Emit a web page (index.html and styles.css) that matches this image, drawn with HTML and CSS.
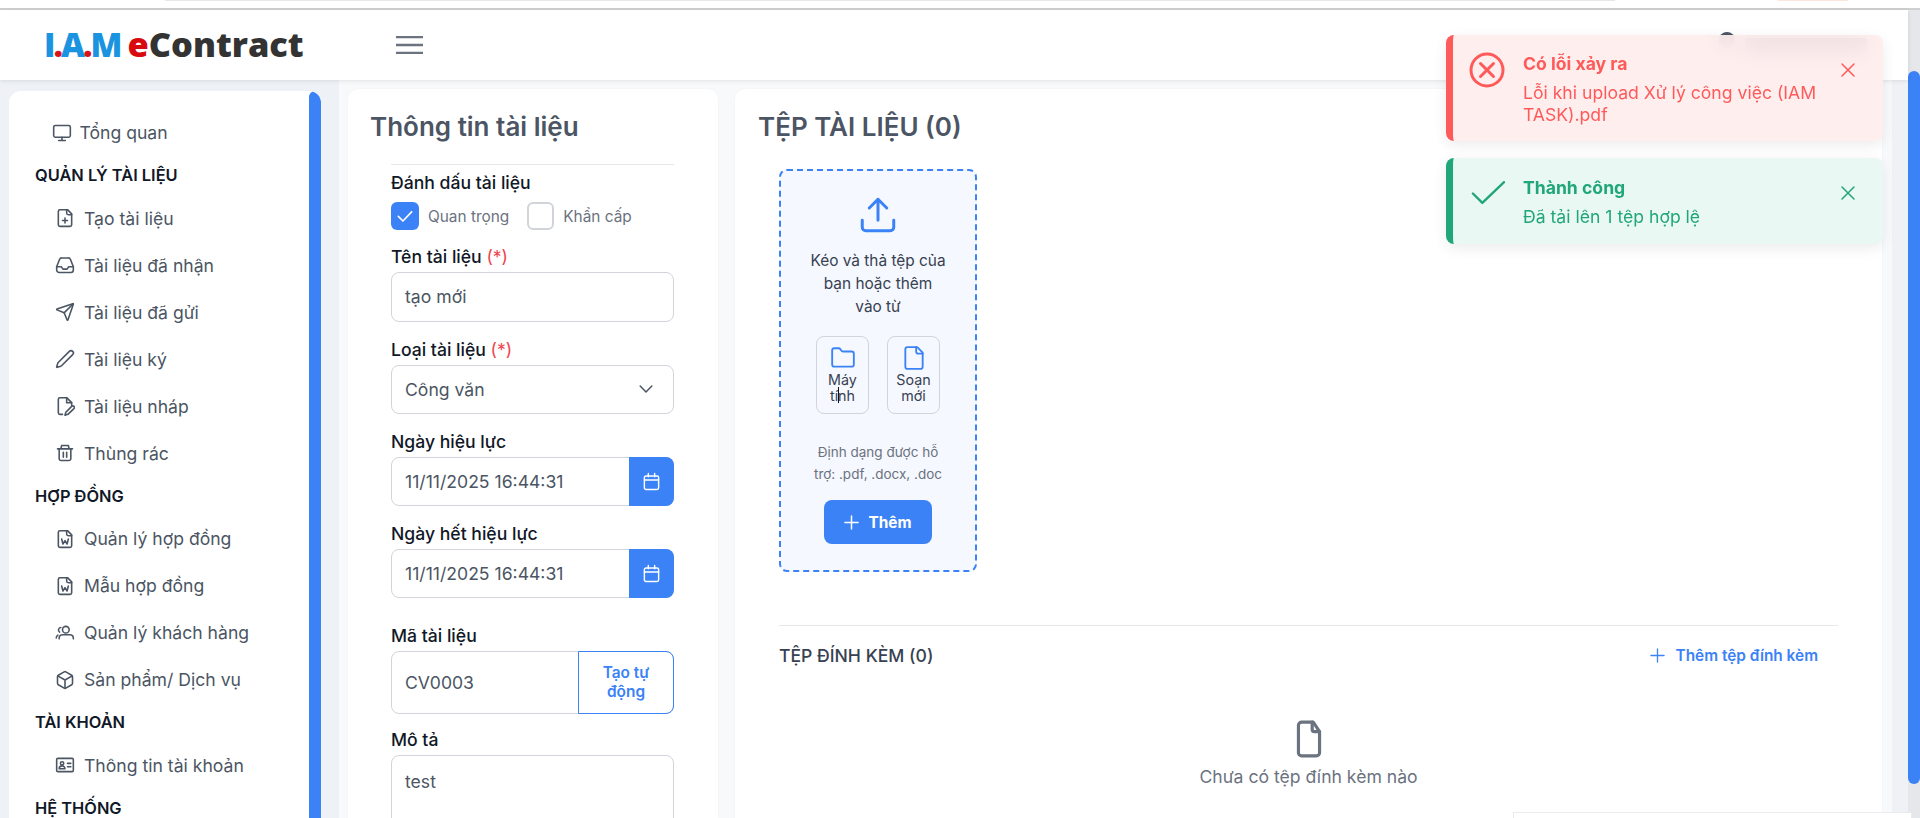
FILE: index.html
```html
<!DOCTYPE html>
<html lang="vi">
<head>
<meta charset="utf-8">
<title>I.A.M eContract</title>
<link rel="stylesheet" href="styles.css">
</head>
<body>
<div class="browser-strip"><span class="addr"></span><span class="peach"></span></div>
<div class="app">
  <div class="page">
    <header class="topbar">
      <div class="logo"><span class="logo-iam">I<i>.</i>A<i>.</i>M</span> <span class="logo-e">e</span><span class="logo-c">Contract</span></div>
      <svg class="burger" viewBox="0 0 27 18"><path d="M0 1h27M0 9h27M0 17h27"/></svg>
      <div class="user"><svg class="user-ico" viewBox="0 0 16 16"><circle cx="8" cy="8" r="8"/></svg><span class="user-name"></span></div>
    </header>
    <div class="layout">
      <aside class="side">
        <div class="side-card">
          <nav class="nav">
            <a class="item item-top"><svg class="ico" viewBox="0 0 24 24"><rect x="2" y="3" width="20" height="14" rx="2"/><path d="M8 21h8M12 17v4"/></svg><span>Tổng quan</span></a>
            <div class="sec">QUẢN LÝ TÀI LIỆU</div>
            <a class="item"><svg class="ico" viewBox="0 0 24 24"><path d="M15 2H6a2 2 0 0 0-2 2v16a2 2 0 0 0 2 2h12a2 2 0 0 0 2-2V7Z"/><path d="M14 2v4a2 2 0 0 0 2 2h4M9 15h6M12 18v-6"/></svg><span>Tạo tài liệu</span></a>
            <a class="item"><svg class="ico" viewBox="0 0 24 24"><path d="M2 14l3.400-8.600A3 3 0 0 1 8.200 3.500h7.600a3 3 0 0 1 2.800 1.900L22 14v4a3 3 0 0 1-3 3H5a3 3 0 0 1-3-3z"/><path d="M2 14h5.500l2 3h5l2-3H22"/></svg><span>Tài liệu đã nhận</span></a>
            <a class="item"><svg class="ico" viewBox="0 0 24 24"><path d="M14.536 21.686a.5.5 0 0 0 .937-.024l6.500-19a.496.496 0 0 0-.635-.635l-19 6.500a.5.5 0 0 0-.024.937l7.930 3.180a2 2 0 0 1 1.112 1.110z"/><path d="m21.854 2.147-10.940 10.939"/></svg><span>Tài liệu đã gửi</span></a>
            <a class="item"><svg class="ico" viewBox="0 0 24 24"><path d="M21.174 6.812a1 1 0 0 0-3.986-3.987L3.842 16.174a2 2 0 0 0-.5.830l-1.321 4.352a.5.5 0 0 0 .623.622l4.353-1.320a2 2 0 0 0 .830-.497z"/></svg><span>Tài liệu ký</span></a>
            <a class="item"><svg class="ico" viewBox="0 0 24 24"><path d="M9 22H6a2 2 0 0 1-2-2V4a2 2 0 0 1 2-2h8l6 6v3"/><path d="M14 2v6h6"/><path d="M20 12.500a1.900 1.900 0 0 1 2.700 2.700L15.500 22l-3.500 1 1-3.500z"/></svg><span>Tài liệu nháp</span></a>
            <a class="item"><svg class="ico" viewBox="0 0 24 24"><path d="M3 7h18M5 7v12a2 2 0 0 0 2 2h10a2 2 0 0 0 2-2V7M7 7l1-4h8l1 4M10 11v6M14 11v6"/></svg><span>Thùng rác</span></a>
            <div class="sec">HỢP ĐỒNG</div>
            <a class="item"><svg class="ico" viewBox="0 0 24 24"><path d="M15 2H6a2 2 0 0 0-2 2v16a2 2 0 0 0 2 2h12a2 2 0 0 0 2-2V7Z"/><path d="M14 2v4a2 2 0 0 0 2 2h4M8 12l1.500 6 2.500-4 2.500 4 1.500-6"/></svg><span>Quản lý hợp đồng</span></a>
            <a class="item"><svg class="ico" viewBox="0 0 24 24"><path d="M15 2H6a2 2 0 0 0-2 2v16a2 2 0 0 0 2 2h12a2 2 0 0 0 2-2V7Z"/><path d="M14 2v4a2 2 0 0 0 2 2h4M8 12l1.500 6 2.500-4 2.500 4 1.500-6"/></svg><span>Mẫu hợp đồng</span></a>
            <a class="item"><svg class="ico" viewBox="0 0 24 24"><circle cx="13" cy="8" r="4"/><path d="M22 19v-1a4 4 0 0 0-4-4H9a4 4 0 0 0-4 4v1M7 5.500a3 3 0 0 0-1.500 5.500M1.500 18a4 4 0 0 1 2-3.500"/></svg><span>Quản lý khách hàng</span></a>
            <a class="item"><svg class="ico" viewBox="0 0 24 24"><path d="M21 8a2 2 0 0 0-1-1.730l-7-4a2 2 0 0 0-2 0l-7 4A2 2 0 0 0 3 8v8a2 2 0 0 0 1 1.730l7 4a2 2 0 0 0 2 0l7-4A2 2 0 0 0 21 16Z"/><path d="m3.300 7 8.700 5 8.700-5M12 22V12"/></svg><span>Sản phẩm/ Dịch vụ</span></a>
            <div class="sec">TÀI KHOẢN</div>
            <a class="item"><svg class="ico" viewBox="0 0 24 24"><rect x="2" y="4" width="20" height="16" rx="1.500"/><circle cx="8.500" cy="10" r="2"/><path d="M5 16.500a3.500 3.500 0 0 1 7 0zM15 10h4M15 14h4"/></svg><span>Thông tin tài khoản</span></a>
            <div class="sec">HỆ THỐNG</div>
          </nav>
          <div class="side-thumb"></div>
        </div>
      </aside>
      <main class="content">
        <section class="panel panel-info">
          <h2 class="title">Thông tin tài liệu</h2>
          <div class="form">
            <div class="label">Đánh dấu tài liệu</div>
            <div class="checks">
              <span class="check on"><svg viewBox="0 0 24 24"><path d="M4 12.500l5.500 5.500L20 7"/></svg></span><span class="check-text">Quan trọng</span>
              <span class="check off"></span><span class="check-text">Khẩn cấp</span>
            </div>
            <div class="label label-name">Tên tài liệu <em>(*)</em></div>
            <div class="input">tạo mới</div>
            <div class="label">Loại tài liệu <em>(*)</em></div>
            <div class="input select"><span>Công văn</span><svg viewBox="0 0 24 24"><path d="M5 8.500l7 7 7-7"/></svg></div>
            <div class="label">Ngày hiệu lực</div>
            <div class="input date"><span>11/11/2025 16:44:31</span><b class="date-btn"><svg viewBox="0 0 24 24"><rect x="3" y="5" width="18" height="17" rx="2"/><path d="M3 10h18M8 2v4M16 2v4"/></svg></b></div>
            <div class="label">Ngày hết hiệu lực</div>
            <div class="input date"><span>11/11/2025 16:44:31</span><b class="date-btn"><svg viewBox="0 0 24 24"><rect x="3" y="5" width="18" height="17" rx="2"/><path d="M3 10h18M8 2v4M16 2v4"/></svg></b></div>
            <div class="label label-code">Mã tài liệu</div>
            <div class="input code"><span>CV0003</span><b class="auto">Tạo tự động</b></div>
            <div class="label label-desc">Mô tả</div>
            <div class="input area">test</div>
          </div>
        </section>
        <section class="panel panel-files">
          <h2 class="title">TỆP TÀI LIỆU (0)</h2>
          <div class="files">
            <div class="drop">
              <svg class="up" viewBox="0 0 24 24"><path d="M12 15V3M7 8l5-5 5 5M21 15v4a2 2 0 0 1-2 2H5a2 2 0 0 1-2-2v-4"/></svg>
              <p class="drop-text">Kéo và thả tệp của<br>bạn hoặc thêm<br>vào từ</p>
              <div class="sources">
                <div class="src"><svg viewBox="0 0 24 24"><path d="M20 20a2 2 0 0 0 2-2V8a2 2 0 0 0-2-2h-7.900a2 2 0 0 1-1.690-.900L9.600 3.900A2 2 0 0 0 7.930 3H4a2 2 0 0 0-2 2v13a2 2 0 0 0 2 2Z"/></svg><span>Máy tính</span><i class="caret"></i></div>
                <div class="src"><svg viewBox="0 0 24 24"><path d="M15 2H6a2 2 0 0 0-2 2v16a2 2 0 0 0 2 2h12a2 2 0 0 0 2-2V7Z"/><path d="M14 2v4a2 2 0 0 0 2 2h4"/></svg><span>Soạn mới</span></div>
              </div>
              <p class="drop-hint">Định dạng được hỗ trợ: .pdf, .docx, .doc</p>
              <div class="add"><svg viewBox="0 0 16 16"><path d="M8 1v14M1 8h14"/></svg><span>Thêm</span></div>
            </div>
            <div class="attach-head">
              <span class="attach-title">TỆP ĐÍNH KÈM (0)</span>
              <span class="attach-add"><svg viewBox="0 0 16 16"><path d="M8 1v14M1 8h14"/></svg>Thêm tệp đính kèm</span>
            </div>
            <div class="empty">
              <svg viewBox="0 0 24 36"><path d="M16 2H5a3 3 0 0 0-3 3v26a3 3 0 0 0 3 3h14a3 3 0 0 0 3-3V11Z"/><path d="M15 2v7a2 2 0 0 0 2 2h5"/></svg>
              <span>Chưa có tệp đính kèm nào</span>
            </div>
          </div>
        </section>
      </main>
    </div>
  </div>
  <div class="rail"><div class="rail-thumb"></div></div>
</div>
<div class="toasts">
  <div class="toast err">
    <svg class="t-ico" viewBox="0 0 36 36"><circle cx="18" cy="18" r="16"/><path d="M11.500 11.500l13 13M24.500 11.500l-13 13"/></svg>
    <div class="t-body"><strong>Có lỗi xảy ra</strong><p>Lỗi khi upload Xử lý công việc (IAM TASK).pdf</p></div>
    <svg class="t-x" viewBox="0 0 16 16"><path d="M2 2l12 12M14 2L2 14"/></svg>
  </div>
  <div class="toast ok">
    <svg class="t-ico t-check" viewBox="0 0 36 26"><path d="M2 13l10 10L35 1"/></svg>
    <div class="t-body"><strong>Thành công</strong><p>Đã tải lên 1 tệp hợp lệ</p></div>
    <svg class="t-x" viewBox="0 0 16 16"><path d="M2 2l12 12M14 2L2 14"/></svg>
  </div>
</div>
<div class="corner-widget"></div>
</body>
</html>
```
FILE: styles.css
```css
* { box-sizing: border-box; }
html, body { margin: 0; height: 818px; overflow: hidden; }
body { font-family: Inter, "Noto Sans", sans-serif; background: #fff; color: #4b5563; font-size: 17.600px; position: relative; }
svg { display: block; fill: none; stroke: currentColor; stroke-linecap: round; stroke-linejoin: round; }
p, h2 { margin: 0; }

.browser-strip { height: 10px; background: #fff; border-bottom: 2px solid #cfcfcf; position: relative; }
.addr { position: absolute; left: 165px; top: 0; width: 1450px; height: 1px; background: #e8e8e8; }
.peach { position: absolute; left: 1778px; top: 0; width: 70px; height: 1px; background: #fbe6dc; }

.app { display: flex; height: 808px; }
.page { flex: 1; min-width: 0; display: flex; flex-direction: column; background: #eef1f6; }
.rail { width: 12px; background: #e5e7eb; padding-top: 61px; }
.rail-thumb { height: 713px; background: #3b82f6; border-radius: 6px; }

.topbar { height: 70px; flex: none; background: #fff; display: flex; align-items: center; padding-left: 44px; box-shadow: 0 1px 4px rgba(0,0,0,.1); position: relative; z-index: 2; }
.logo { width: 352px; font-family: "Open Sans", sans-serif; font-weight: 800; font-size: 34.400px; line-height: 40px; white-space: nowrap; color: #333; margin-top: -2px; }
.logo-iam { color: #1a94e0; font-size: 33px; letter-spacing: -2px; margin-right: -2px; }
.logo-iam i { color: #d8141b; font-style: normal; }
.logo-e { color: #d8090f; }
.logo-c { color: #333; }
.burger { width: 27px; height: 18px; stroke: #6b7280; stroke-width: 2.400; stroke-linecap: butt; margin-top: -1px; }
.user { position: absolute; left: 1719px; top: 22px; display: flex; gap: 10px; align-items: flex-start; }
.user-ico { width: 16px; height: 16px; fill: #4b5563; stroke: none; }
.user-name { width: 122px; height: 14px; margin-top: 6px; border-radius: 3px; background: #6b7280; }

.layout { flex: 1; min-height: 0; display: flex; }
.side { width: 339px; flex: none; padding: 11px 18px 0 9px; }
.side-card { height: 100%; background: #fff; border-radius: 12px 12px 0 0; display: flex; overflow: hidden; }
.nav { flex: 1; padding: 18px 0 0 26px; }
.side-thumb { width: 12px; background: #3b82f6; border-radius: 6px 6px 0 0; }
.item { display: flex; align-items: center; height: 47px; padding-left: 19.500px; gap: 9.500px; color: #4b5563; font-size: 17.600px; }
.item-top { padding-left: 16.500px; gap: 8px; }
.ico { width: 20px; height: 20px; flex: none; stroke-width: 1.900; }
.sec { height: 38.500px; line-height: 38.500px; font-size: 16.400px; font-weight: 600; color: #111827; }

.content { flex: 1; min-width: 0; background: #f8f9fb; margin-right: 16px; padding: 9px 10px 0 9px; display: flex; gap: 17px; }
.panel { background: #fff; border-radius: 10px 10px 0 0; box-shadow: 0 0 2px rgba(0,0,0,.05); padding-top: 22px; overflow: hidden; }
.panel-info { width: 370px; flex: none; padding-left: 22px; padding-right: 44px; }
.panel-files { flex: 1; min-width: 0; padding-left: 23px; padding-right: 44px; }
.title { font-size: 26px; line-height: 32px; font-weight: 600; color: #4b5563; }

.form { margin: 21px 0 0 21px; border-top: 1px solid #e5e7eb; padding-top: 6px; }
.label { font-size: 17.600px; line-height: 24px; font-weight: 500; color: #111827; margin-top: 16px; margin-bottom: 3px; }
.form > .label:first-child { margin-top: 0; margin-bottom: 7px; }
.label em { font-style: normal; font-weight: 400; color: #f0434b; }
.label-name { margin-top: 15px; }
.label-code { margin-top: 26px; }
.label-desc { margin-top: 14px; }
.checks { display: flex; align-items: center; height: 28px; font-size: 15.400px; color: #6b7280; }
.check { width: 28px; height: 28px; border-radius: 6px; flex: none; display: flex; align-items: center; justify-content: center; }
.check.on { background: #3b82f6; color: #fff; }
.check.on svg { width: 20px; height: 20px; stroke-width: 2; }
.check.off { width: 27px; border: 2px solid #d1d5db; margin-left: 18px; }
.check-text { margin-left: 9px; }
.input { height: 49.500px; border: 1px solid #d1d5db; border-radius: 8px; padding-left: 13px; display: flex; align-items: center; justify-content: space-between; color: #4b5563; background: #fff; }
.select { padding-right: 17px; }
.select svg { width: 20px; height: 20px; stroke-width: 1.800; color: #4b5563; }
.date { height: 49px; padding-right: 0; }
.date-btn { width: 45px; align-self: stretch; margin: -1px -1px -1px 0; border-radius: 0 8px 8px 0; background: #3b82f6; color: #fff; display: flex; align-items: center; justify-content: center; }
.date-btn svg { width: 19px; height: 19px; stroke-width: 1.800; }
.code { height: 62.500px; }
.auto { width: 96px; align-self: stretch; flex: none; margin: -1px -1px -1px 0; border: 1.500px solid #3b82f6; border-radius: 0 8px 8px 0; color: #3b82f6; font-size: 15.400px; font-weight: 600; line-height: 19px; text-align: center; display: flex; align-items: center; justify-content: center; padding: 0 14px; }
.area { height: 100px; align-items: flex-start; padding-top: 14px; line-height: 24px; }

.files { margin: 26px 0 0 21px; }
.drop { width: 198px; height: 403px; border: 2px dashed #3b82f6; border-radius: 8px; background: #f5f8fe; display: flex; flex-direction: column; align-items: center; padding-top: 23px; position: relative; }
.up { width: 42px; height: 42px; color: #3b82f6; stroke-width: 1.700; flex: none; }
.drop-text { margin-top: 13px; font-size: 15.400px; line-height: 23px; text-align: center; color: #374151; }
.sources { display: flex; gap: 18px; margin-top: 18px; }
.src { width: 53px; height: 78px; border: 1px solid #d1d5db; border-radius: 8px; display: flex; flex-direction: column; align-items: center; padding-top: 8px; font-size: 14.300px; line-height: 16px; text-align: center; color: #374151; position: relative; }
.src svg { width: 26px; height: 26px; color: #3b82f6; stroke-width: 1.700; margin-bottom: 1px; flex: none; }
.src span { width: 42px; }
.caret { position: absolute; left: 21px; top: 50px; width: 1px; height: 16px; background: #111; }
.drop-hint { width: 130px; margin-top: 28px; font-size: 13.500px; line-height: 21.500px; text-align: center; color: #6b7280; }
.add { width: 108px; height: 44px; margin-top: 15px; background: #3b82f6; border-radius: 8px; color: #fff; font-size: 15.400px; font-weight: 700; display: flex; align-items: center; justify-content: center; gap: 9px; }
.add svg { width: 15px; height: 15px; stroke-width: 1.600; }
.attach-head { margin-top: 53px; border-top: 1px solid #e5e7eb; height: 60px; display: flex; align-items: center; justify-content: space-between; padding-right: 20px; }
.attach-title { font-size: 17.600px; font-weight: 500; color: #374151; }
.attach-add { display: flex; align-items: center; gap: 10px; font-size: 15.400px; font-weight: 600; color: #3b82f6; }
.attach-add svg { width: 15px; height: 15px; stroke-width: 1.400; }
.empty { display: flex; flex-direction: column; align-items: center; margin-top: 35px; color: #6b7280; }
.empty svg { width: 26px; height: 38px; stroke-width: 3; }
.empty span { margin-top: 7px; line-height: 24px; }

.toasts { position: absolute; left: 1446px; top: 35px; width: 437px; display: flex; flex-direction: column; gap: 17px; z-index: 5; }
.toast { border-radius: 8px; border-left: 7px solid; padding: 17px 27px 15px 16px; display: flex; box-shadow: 0 4px 14px rgba(0,0,0,.08); backdrop-filter: blur(10px); }
.toast.err { background: rgba(254,236,236,.9); border-color: #ff5a5a; color: #ff5a5a; }
.toast.ok { background: #e9f8f2; border-color: #21a67a; color: #21a67a; padding-top: 18px; padding-bottom: 16px; }
.t-ico { width: 36px; height: 36px; flex: none; stroke-width: 3; }
.t-check { width: 34px; height: 25px; stroke-width: 2.500; margin-top: 5px; margin-left: 2px; margin-right: 0; }
.t-body { flex: 1; min-width: 0; margin-left: 18px; margin-right: 17px; }
.t-body strong { display: block; font-weight: 700; font-size: 17.600px; line-height: 24px; margin-bottom: 6px; }
.t-body p { font-size: 17.600px; line-height: 22px; }
.t-x { width: 16px; height: 16px; flex: none; stroke-width: 1.500; margin-top: 10px; }
.ok .t-x { margin-top: 9px; }

.corner-widget { position: absolute; left: 1513px; top: 812px; width: 399px; height: 6px; background: #fff; border: 1px solid #e9ebef; border-bottom: 0; z-index: 4; }
```
